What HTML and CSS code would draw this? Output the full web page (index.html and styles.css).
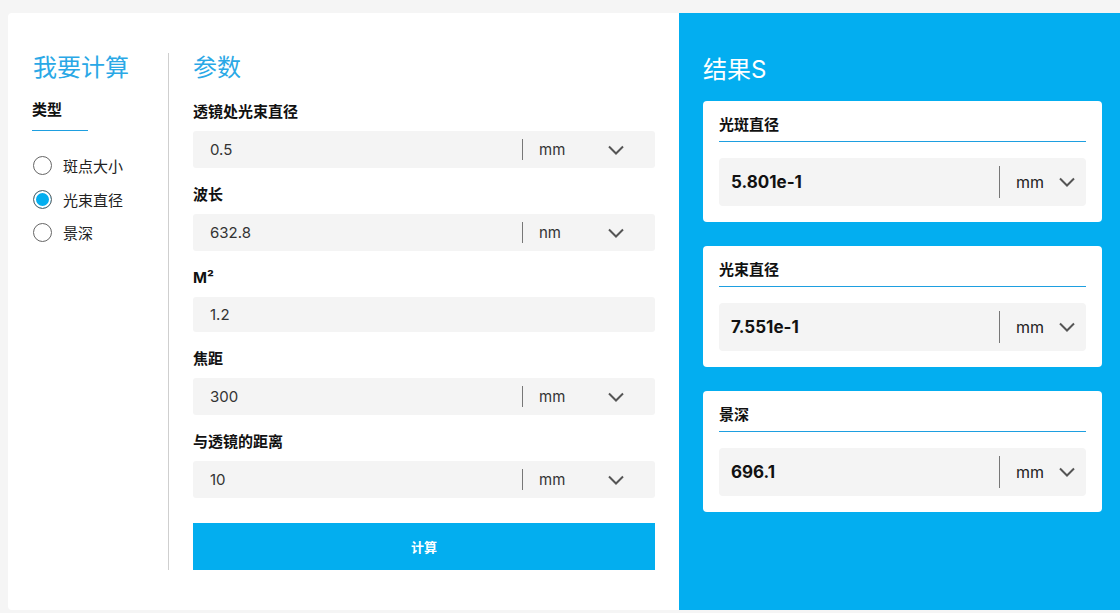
FILE: index.html
```html
<!DOCTYPE html>
<html lang="zh">
<head>
<meta charset="utf-8">
<title>光束计算</title>
<link rel="stylesheet" href="styles.css">
</head>
<body>
<div class="card">
  <div class="form-area">
    <div class="col-type">
      <h2 class="sec-title">我要计算</h2>
      <div class="type-label">类型</div>
      <ul class="radio-list">
        <li class="radio-item"><span class="radio"></span><span>斑点大小</span></li>
        <li class="radio-item"><span class="radio checked"></span><span>光束直径</span></li>
        <li class="radio-item"><span class="radio"></span><span>景深</span></li>
      </ul>
    </div>
    <div class="col-params">
      <h2 class="sec-title params-title">参数</h2>
      <div class="field-group">
        <div class="field-label">透镜处光束直径</div>
        <div class="field">
          <span class="field-value">0.5</span>
          <span class="unit"><span>mm</span><svg class="chev" width="16" height="10" viewBox="0 0 16 10"><path d="M1 1.5 L8 8.5 L15 1.5" fill="none" stroke="#555" stroke-width="2"/></svg></span>
        </div>
      </div>
      <div class="field-group">
        <div class="field-label">波长</div>
        <div class="field">
          <span class="field-value">632.8</span>
          <span class="unit"><span>nm</span><svg class="chev" width="16" height="10" viewBox="0 0 16 10"><path d="M1 1.5 L8 8.5 L15 1.5" fill="none" stroke="#555" stroke-width="2"/></svg></span>
        </div>
      </div>
      <div class="field-group">
        <div class="field-label">M²</div>
        <div class="field no-unit">
          <span class="field-value">1.2</span>
        </div>
      </div>
      <div class="field-group">
        <div class="field-label">焦距</div>
        <div class="field">
          <span class="field-value">300</span>
          <span class="unit"><span>mm</span><svg class="chev" width="16" height="10" viewBox="0 0 16 10"><path d="M1 1.5 L8 8.5 L15 1.5" fill="none" stroke="#555" stroke-width="2"/></svg></span>
        </div>
      </div>
      <div class="field-group">
        <div class="field-label">与透镜的距离</div>
        <div class="field">
          <span class="field-value">10</span>
          <span class="unit"><span>mm</span><svg class="chev" width="16" height="10" viewBox="0 0 16 10"><path d="M1 1.5 L8 8.5 L15 1.5" fill="none" stroke="#555" stroke-width="2"/></svg></span>
        </div>
      </div>
      <button class="calc-btn">计算</button>
    </div>
  </div>
  <div class="results">
    <h2 class="results-title">结果S</h2>
    <div class="result-card">
      <div class="result-label">光斑直径</div>
      <div class="result-field">
        <span class="result-value">5.801e-1</span>
        <span class="result-unit"><span>mm</span><svg class="chev" width="16" height="10" viewBox="0 0 16 10"><path d="M1 1.5 L8 8.5 L15 1.5" fill="none" stroke="#555" stroke-width="2"/></svg></span>
      </div>
    </div>
    <div class="result-card">
      <div class="result-label">光束直径</div>
      <div class="result-field">
        <span class="result-value">7.551e-1</span>
        <span class="result-unit"><span>mm</span><svg class="chev" width="16" height="10" viewBox="0 0 16 10"><path d="M1 1.5 L8 8.5 L15 1.5" fill="none" stroke="#555" stroke-width="2"/></svg></span>
      </div>
    </div>
    <div class="result-card">
      <div class="result-label">景深</div>
      <div class="result-field">
        <span class="result-value">696.1</span>
        <span class="result-unit"><span>mm</span><svg class="chev" width="16" height="10" viewBox="0 0 16 10"><path d="M1 1.5 L8 8.5 L15 1.5" fill="none" stroke="#555" stroke-width="2"/></svg></span>
      </div>
    </div>
  </div>
</div>
</body>
</html>
```

FILE: styles.css
```css
* { box-sizing: border-box; }

html, body {
  margin: 0;
  padding: 0;
  background: #f5f5f5;
  font-family: "Inter", "Noto Sans CJK SC", sans-serif;
  color: #111;
  overflow: hidden;
}

.card {
  margin: 13px 0 0 8px;
  width: 1112px;
  height: 597px;
  background: #fff;
  border-radius: 4px 0 0 4px;
  display: flex;
  overflow: hidden;
}

.form-area {
  display: flex;
  padding: 40px 0;
  width: 671px;
}

.col-type {
  width: 161px;
  padding-left: 25px;
  border-right: 1px solid #cfcfcf;
}

.sec-title {
  margin: 0;
  font-size: 24px;
  line-height: 30px;
  font-weight: 400;
  color: #2aa8e6;
}

.type-label {
  margin-top: 16px;
  width: 56px;
  font-size: 15px;
  font-weight: 700;
  line-height: 22px;
  padding-bottom: 9px;
  border-bottom: 1px solid #1e9fe0;
  margin-left: -1px;
}

.radio-list {
  list-style: none;
  margin: 18px 0 0;
  padding: 0;
}

.radio-item {
  display: flex;
  align-items: center;
  gap: 11px;
  height: 33.5px;
  font-size: 15px;
  color: #222;
}

.radio {
  width: 19px;
  height: 19px;
  border-radius: 50%;
  border: 1px solid #666;
  background: #fff;
  flex: none;
}

.radio.checked {
  background: #03aeef;
  box-shadow: inset 0 0 0 2px #fff;
}

.col-params {
  width: 510px;
  padding: 0 24px;
}

.params-title {
  margin-bottom: 18px;
}

.field-group {
  margin-bottom: 16px;
}

.field-label {
  font-size: 15px;
  font-weight: 700;
  line-height: 22px;
  margin-bottom: 8px;
}

.field {
  height: 37px;
  background: #f4f4f4;
  border-radius: 3px;
  display: flex;
  align-items: center;
  justify-content: space-between;
  padding-left: 17px;
}

.field.no-unit {
  height: 35px;
}

.field-value {
  font-size: 15px;
  color: #333;
}

.unit {
  width: 133px;
  height: 21px;
  border-left: 1px solid #777;
  display: flex;
  align-items: center;
  justify-content: space-between;
  padding: 0 31px 0 16px;
  font-size: 15px;
  color: #333;
}

.chev { display: block; }

.calc-btn {
  display: block;
  width: 100%;
  height: 47px;
  margin-top: 25px;
  border: 0;
  border-radius: 0;
  background: #03aeef;
  color: #fff;
  font-family: "Inter", "Noto Sans CJK SC", sans-serif;
  font-size: 13px;
  font-weight: 700;
}

.results {
  flex: 1;
  background: #03aef0;
  padding: 42px 10px 0 24px;
}

.results-title {
  margin: 0 0 16px;
  font-size: 24px;
  line-height: 30px;
  font-weight: 400;
  color: #fff;
}

.result-card {
  width: 399px;
  background: #fff;
  border-radius: 4px;
  padding: 12px 16px 16px;
  margin-bottom: 24px;
}

.result-label {
  font-size: 15px;
  font-weight: 700;
  line-height: 24px;
  padding-bottom: 4px;
  border-bottom: 1px solid #1e9fe0;
}

.result-field {
  margin-top: 16px;
  height: 48px;
  background: #f4f4f4;
  border-radius: 4px;
  display: flex;
  align-items: center;
  justify-content: space-between;
  padding-left: 12px;
}

.result-value {
  font-size: 17px;
  font-weight: 700;
  color: #111;
}

.result-unit {
  width: 87px;
  height: 32px;
  border-left: 1px solid #777;
  display: flex;
  align-items: center;
  justify-content: space-between;
  padding: 0 11px 0 16px;
  font-size: 16px;
  color: #222;
}
```
